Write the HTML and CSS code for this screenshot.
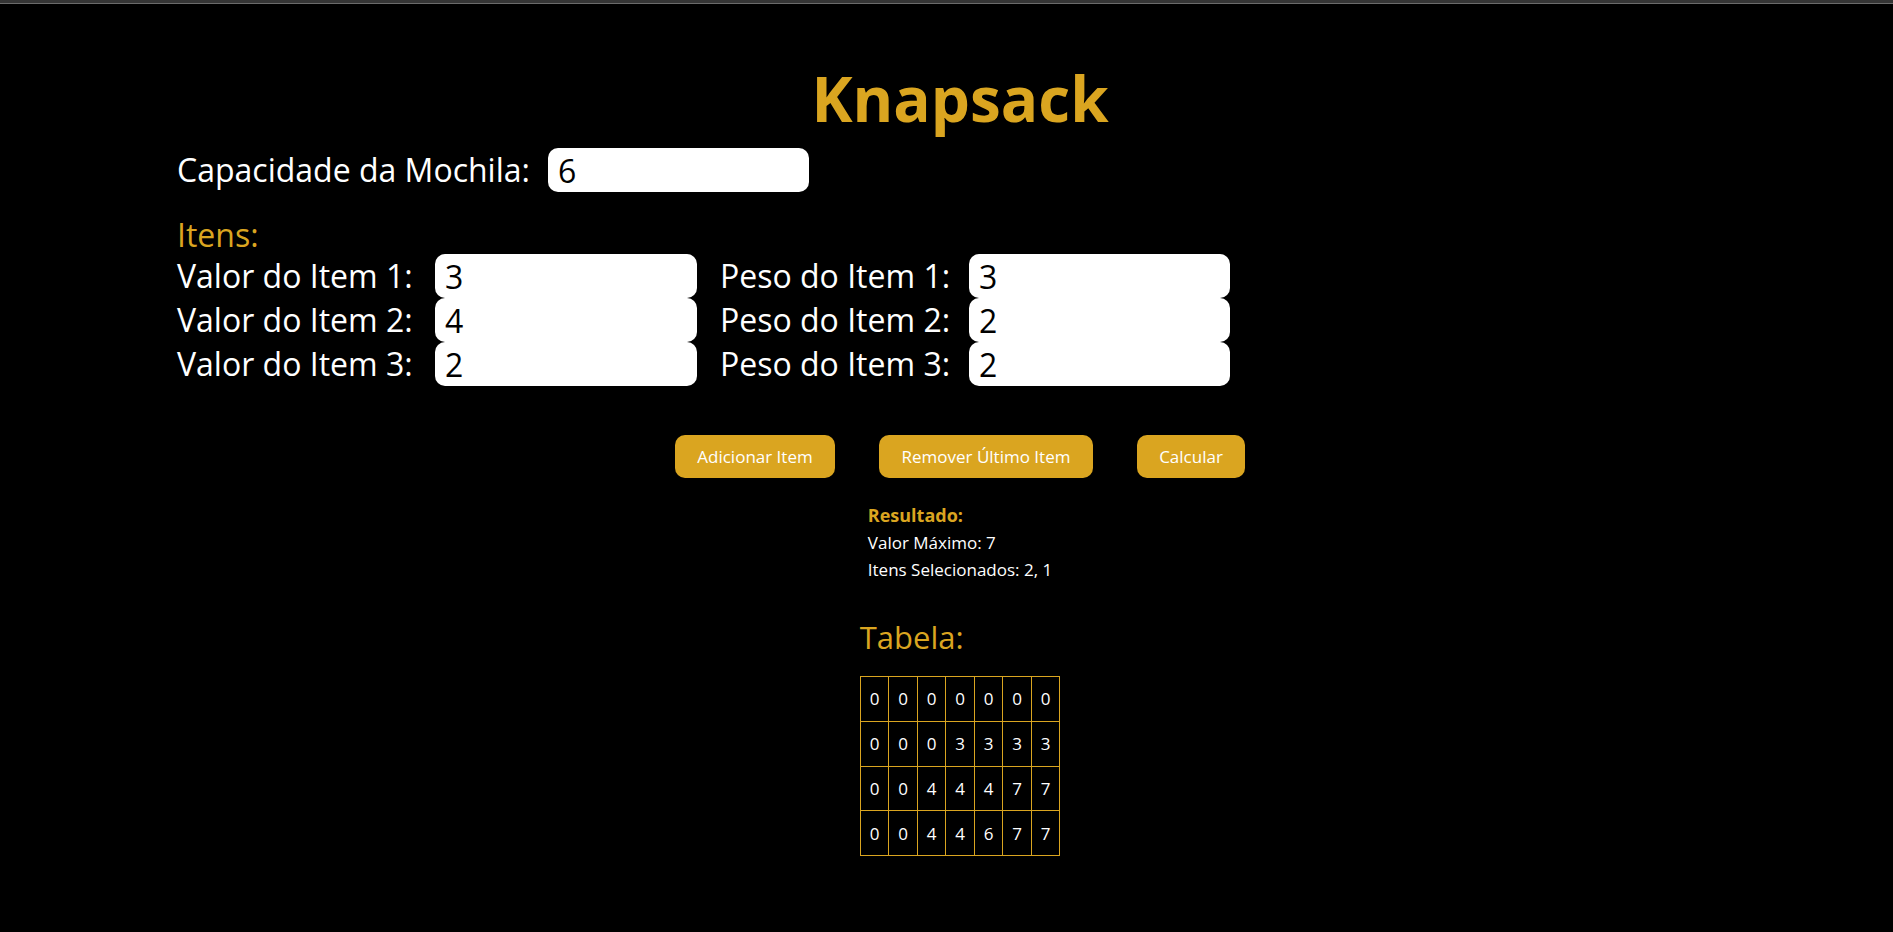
FILE: index.html
```html
<!DOCTYPE html>
<html lang="pt">
<head>
<meta charset="utf-8">
<title>Knapsack</title>
<link rel="stylesheet" href="styles.css">
</head>
<body>
<div class="topbar"></div>
<main class="page">
  <h1 class="title">Knapsack</h1>

  <section class="form">
    <div class="field field--cap">
      <label class="label" for="cap">Capacidade da Mochila:</label>
      <input class="input" id="cap" type="text" value="6">
    </div>

    <h2 class="section-title">Itens:</h2>

    <div class="items">
      <div class="item-row">
        <div class="field field--valor">
          <label class="label">Valor do Item 1:</label>
          <input class="input" type="text" value="3">
        </div>
        <div class="field field--peso">
          <label class="label">Peso do Item 1:</label>
          <input class="input" type="text" value="3">
        </div>
      </div>
      <div class="item-row">
        <div class="field field--valor">
          <label class="label">Valor do Item 2:</label>
          <input class="input" type="text" value="4">
        </div>
        <div class="field field--peso">
          <label class="label">Peso do Item 2:</label>
          <input class="input" type="text" value="2">
        </div>
      </div>
      <div class="item-row">
        <div class="field field--valor">
          <label class="label">Valor do Item 3:</label>
          <input class="input" type="text" value="2">
        </div>
        <div class="field field--peso">
          <label class="label">Peso do Item 3:</label>
          <input class="input" type="text" value="2">
        </div>
      </div>
    </div>
  </section>

  <div class="buttons">
    <button class="btn btn--add">Adicionar Item</button>
    <button class="btn btn--remove">Remover Último Item</button>
    <button class="btn btn--calc">Calcular</button>
  </div>

  <div class="result-wrap">
    <div class="result">
      <div class="result-title">Resultado:</div>
      <div class="result-line">Valor Máximo: 7</div>
      <div class="result-line">Itens Selecionados: 2, 1</div>
    </div>
  </div>

  <div class="table-wrap">
    <div class="table-block">
      <h2 class="section-title section-title--table">Tabela:</h2>
      <table class="dp">
        <tr><td>0</td><td>0</td><td>0</td><td>0</td><td>0</td><td>0</td><td>0</td></tr>
        <tr><td>0</td><td>0</td><td>0</td><td>3</td><td>3</td><td>3</td><td>3</td></tr>
        <tr><td>0</td><td>0</td><td>4</td><td>4</td><td>4</td><td>7</td><td>7</td></tr>
        <tr><td>0</td><td>0</td><td>4</td><td>4</td><td>6</td><td>7</td><td>7</td></tr>
      </table>
    </div>
  </div>
</main>
</body>
</html>
```

FILE: styles.css
```css
* { box-sizing: border-box; }

html, body {
  margin: 0;
  padding: 0;
  background: #000;
}

body {
  font-family: "Open Sans", "Liberation Sans", sans-serif;
  color: #fff;
  height: 932px;
  overflow: hidden;
}

.topbar {
  height: 4px;
  background: #353535;
  border-bottom: 1px solid #6b6b6b;
}

.page {
  padding-left: 27px;
}

.title {
  margin: 62px 0 0 0;
  text-align: center;
  font-size: 62px;
  line-height: 64px;
  font-weight: 700;
  color: #daa520;
}

.form {
  margin: 18px 0 0 150px;
}

.field {
  display: grid;
  align-items: center;
}

.field--cap { grid-template-columns: 371px 261px; }
.field--valor { grid-template-columns: 258px 262px; }
.field--peso { grid-template-columns: 249px 261px; }

.label {
  font-size: 32px;
  line-height: 44px;
  color: #fff;
  white-space: nowrap;
}

.input {
  height: 44px;
  border: none;
  border-radius: 10px;
  background: #fff;
  color: #000;
  font-family: "Open Sans", "Liberation Sans", sans-serif;
  font-size: 32px;
  padding: 0 10px;
  outline: none;
}

.section-title {
  margin: 24px 0 0 0;
  font-size: 32px;
  line-height: 38px;
  font-weight: 400;
  color: #daa520;
}

.items {
  display: flex;
  flex-direction: column;
}

.item-row {
  display: flex;
  gap: 23px;
}

.buttons {
  display: flex;
  justify-content: center;
  gap: 44px;
  margin-top: 49px;
}

.btn {
  height: 43px;
  border: none;
  border-radius: 10px;
  background: #daa520;
  color: #fff;
  font-family: "Open Sans", "Liberation Sans", sans-serif;
  font-size: 17px;
  padding: 0;
}

.btn--add { width: 160px; }
.btn--remove { width: 214px; }
.btn--calc { width: 108px; }

.result-wrap {
  display: flex;
  justify-content: center;
  margin-top: 24px;
}

.result {
  font-size: 17px;
  line-height: 27px;
}

.result-title {
  font-weight: 700;
  font-size: 18px;
  color: #daa520;
}

.table-wrap {
  display: flex;
  justify-content: center;
  margin-top: 36px;
}

.section-title--table {
  margin: 0 0 21px 0;
  line-height: 36px;
  font-size: 31px;
}

.dp {
  border-collapse: collapse;
}

.dp td {
  border: 1px solid #daa520;
  width: 28.5px;
  height: 44.75px;
  padding: 0;
  text-align: center;
  font-size: 17px;
  color: #fff;
}
```
